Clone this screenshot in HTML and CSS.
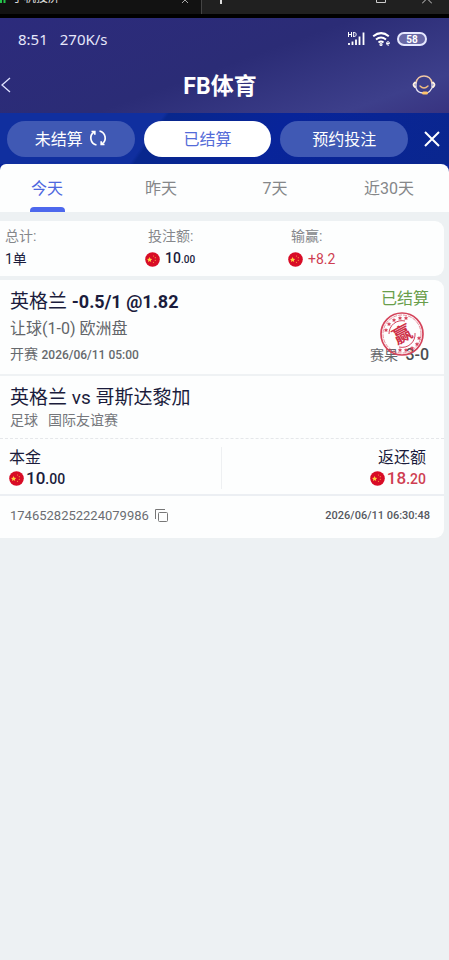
FILE: index.html
```html
<!DOCTYPE html>
<html lang="zh-CN">
<head>
<meta charset="utf-8">
<meta name="viewport" content="width=device-width, initial-scale=1">
<title>FB体育</title>
<link rel="stylesheet" href="styles.css">
</head>
<body>
<svg class="defs" aria-hidden="true">
  <symbol id="flag" viewBox="0 0 15 15">
    <circle cx="7.5" cy="7.5" r="7.3" fill="#d80c26"/>
    <path d="M4.6 5l.8 1.7 1.8.2-1.3 1.3.3 1.8-1.6-.9-1.6.9.3-1.8L2 6.900l1.8-.2z" fill="#ffcf3f"/>
    <g fill="#f59a3c"><circle cx="8.500" cy="4" r=".6"/><circle cx="10.300" cy="5.700" r=".6"/><circle cx="10.300" cy="8.300" r=".6"/><circle cx="8.500" cy="10.300" r=".6"/></g>
  </symbol>
</svg>
<div class="window-bar">
  <div class="window-tab">
    <svg width="6" height="3" viewBox="0 0 6 3"><path d="M1 0v3M4.500 0v3" stroke="#24c34a" stroke-width="2"/></svg>
    <span class="window-title">手机投屏</span>
    <svg class="tab-close" width="8" height="3" viewBox="0 0 8 3"><path d="M1 3l3-3 3 3" fill="none" stroke="#aaa"/></svg>
  </div>
  <div class="window-tools">
    <svg width="4" height="5" viewBox="0 0 4 5"><path d="M2 0v4" stroke="#ddd" stroke-width="2"/></svg>
    <svg class="window-max" width="10" height="4" viewBox="0 0 10 4"><path d="M.5 0v2.500h9V0" fill="none" stroke="#ccc"/></svg>
    <svg width="10" height="4" viewBox="0 0 10 4"><path d="M0 3.500L5-1.500l5 5" fill="none" stroke="#ccc"/></svg>
  </div>
</div>
<header class="hero">
  <div class="status">
    <span>8:51</span><span>270K/s</span>
    <div class="status-icons">
      <svg width="20" height="16" viewBox="0 0 20 16" fill="none" stroke="#fff">
        <path d="M1.500 1v5M4.500 1v5M1.500 3.500h3M6.700 1v5M6.500 1.500h1c2.200 0 2.200 4 0 4h-1"/>
        <path d="M2 12v2M5.500 10.500V14M9 8.500V14M12.500 5.500V14M16.500 1.500V14" stroke-width="1.800"/>
      </svg>
      <svg width="20" height="16" viewBox="0 0 20 16" fill="none" stroke="#fff" stroke-width="2">
        <path d="M1.200 5.200q8-6.200 15.600 0M4 8.500q5-4 10 0M6.500 11.500q2.500-2 5 0"/><circle cx="9" cy="13.500" r=".6"/>
        <path d="M14.500 12.500h3M17.500 12.500q0-1.800-1.500-1.800t-1.500 1.800 2.500 1.700" stroke-width="1"/>
      </svg>
      <span class="battery">58</span>
    </div>
  </div>
  <div class="title-row">
    <button class="icon-button back" aria-label="返回"><svg width="12" height="18" viewBox="0 0 12 18"><path d="M10 2L2 9l8 7" fill="none" stroke="#dfe1ff" stroke-width="1.300"/></svg></button>
    <h1>FB体育</h1>
    <button class="icon-button help" aria-label="客服"><svg width="24" height="22" viewBox="0 0 24 22" fill="none" stroke-linecap="round">
      <path d="M4 9C5 4 8 2 12 2s7 2 8 7" stroke="#f2c9a6" stroke-width="1.500"/>
      <path d="M4 9v5c1 3 3 5 7 5M20 9v5c-1 2-2 4-5 5" stroke="#e9e5f4" stroke-width="1.300"/>
      <path d="M3 8.500Q.2 10.500 3 13M21 8.500q2.800 2 0 4.500" stroke="#fff3e3" stroke-width="2"/>
      <path d="M8 12q4 4 8 0" stroke="#f0bd80" stroke-width="1.400"/><path d="M11.500 19h3" stroke="#ffc46c" stroke-width="3"/>
    </svg></button>
  </div>
</header>
<nav class="filters">
  <button class="pill">未结算
    <svg width="18" height="18" viewBox="0 0 18 18" fill="none" stroke="#fff" stroke-width="1.700"><path d="M7.500 16A7.200 7.200 0 0 1 5 3M10.500 2A7.200 7.200 0 0 1 13 15"/><path d="M2.500 2.500h3.300v3.300M15.500 15.500h-3.300v-3.300"/></svg>
  </button>
  <button class="pill active">已结算</button>
  <button class="pill">预约投注</button>
  <button class="icon-button" aria-label="关闭"><svg width="16" height="16" viewBox="0 0 16 16"><path d="M1 1l14 14M15 1L1 15" stroke="#fff" stroke-width="2"/></svg></button>
</nav>
<div class="tabs-wrap">
  <nav class="tabs">
    <button class="tab current">今天</button>
    <button class="tab">昨天</button>
    <button class="tab">7天</button>
    <button class="tab">近30天</button>
  </nav>
</div>
<main>
  <section class="card summary">
    <div><p class="label">总计:</p><p class="value">1单</p></div>
    <div><p class="label">投注额:</p><p class="value money"><svg class="flag"><use href="#flag"/></svg><span>10<small>.00</small></span></p></div>
    <div><p class="label">输赢:</p><p class="value money red"><svg class="flag"><use href="#flag"/></svg><span>+8.2</span></p></div>
  </section>
  <article class="card bet">
    <section class="selection">
      <div class="line"><h2>英格兰 <b>-0.5/1 @1.82</b></h2><span class="settled">已结算</span></div>
      <p class="market">让球(1-0) 欧洲盘</p>
      <div class="line details"><p>开赛 <time>2026/06/11 05:00</time></p><p class="result">赛果 <strong>3-0</strong></p></div>
      <svg class="stamp" width="46" height="46" viewBox="0 0 46 46" role="img" aria-label="赢">
        <g fill="none" stroke="#d5455c"><circle cx="23" cy="23" r="21" stroke-width="1.700"/><circle cx="23" cy="23" r="19" stroke-width=".6" stroke-dasharray="4 1"/>
        <path d="M10 23a13 13 0 0 1 16-13M36 22a13 13 0 0 1-16 14" stroke-width="1"/></g>
        <g fill="#d5455c"><path id="star" d="M7 17l.7 1.300 1.500.2-1.100 1 .3 1.500L7 20.300 5.600 21l.3-1.500-1.100-1 1.500-.2z"/><use href="#star" x="3" y="-6"/><use href="#star" x="8" y="-10"/><use href="#star" x="14" y="-12"/><use href="#star" x="20" y="-12"/><use href="#star" x="33" y="8"/><use href="#star" x="31" y="14"/><use href="#star" x="26" y="18"/><use href="#star" x="20" y="20"/><use href="#star" x="14" y="20"/></g>
        <text x="23" y="30" text-anchor="middle" transform="rotate(-28 23 23)">赢</text>
      </svg>
    </section>
    <section class="match"><h2>英格兰 vs 哥斯达黎加</h2><p>足球<span>国际友谊赛</span></p></section>
    <section class="amounts">
      <div class="stake"><p>本金</p><p class="big-money"><svg class="flag"><use href="#flag"/></svg><span>10<small>.00</small></span></p></div>
      <div class="return"><p>返还额</p><p class="big-money red"><svg class="flag"><use href="#flag"/></svg><span>18<small>.20</small></span></p></div>
    </section>
    <footer>
      <span class="order">1746528252224079986</span>
      <button class="icon-button copy" aria-label="复制"><svg width="13" height="13" viewBox="0 0 13 13" fill="none" stroke="#777"><path d="M.5 10V.5H10"/><rect x="3.500" y="3.500" width="9" height="9" rx="1"/></svg></button>
      <time>2026/06/11 06:30:48</time>
    </footer>
  </article>
</main>
</body>
</html>
```
FILE: styles.css
```css
* { box-sizing: border-box; }
body {
  margin: 0;
  min-height: 100vh;
  background: #edf1f3;
  color: #1b1c3c;
  font-family: Roboto, "Noto Sans CJK SC", sans-serif;
  font-size: 16px;
}
h1, h2, p { margin: 0; font-weight: 400; }
button { padding: 0; border: 0; background: none; color: inherit; font: inherit; }
svg { display: block; flex: none; }
.defs { position: absolute; width: 0; height: 0; }
.icon-button { display: flex; align-items: center; justify-content: center; }

.window-bar { display: flex; height: 18px; border-bottom: 4px solid #000; background: #202020; overflow: hidden; }
.window-tab { display: flex; align-items: flex-start; width: 45%; background: #121212; border-right: 1px solid #444; }
.window-title { margin: -10px 0 0 6px; color: #ddd; font-size: 12px; line-height: 16px; }
.tab-close { margin: 0 12px 0 auto; }
.window-tools { display: flex; flex: 1; gap: 36px; padding: 0 17px; }
.window-max { margin-left: auto; }

.hero { background: linear-gradient(160deg, #2c2b7c, #2b2c76 50%, #3d3f8b 85%, #383380); color: #fff; }
.status { display: flex; align-items: center; gap: 12px; height: 42px; padding: 0 22px 0 18px; color: #e6e7fa; font-family: "Noto Sans", sans-serif; font-size: 15px; }
.status-icons { display: flex; align-items: center; gap: 5px; margin-left: auto; }
.battery { display: flex; align-items: center; justify-content: center; width: 30px; height: 14px; border: 2px solid #e6e8ff; border-radius: 7px; background: #6969a7; color: #fff; font: 700 10px Roboto, sans-serif; }
.title-row { display: flex; align-items: center; justify-content: space-between; height: 53px; padding: 0 13px 4px 0; }
.back { width: 28px; justify-content: flex-start; }
.help { width: 24px; }
h1 { padding-top: 4px; font-size: 23px; font-weight: 700; line-height: 28px; }

.filters { display: flex; align-items: center; gap: 9px; height: 51px; padding: 0 9px 0 7px; background: linear-gradient(125deg, #102f9f 34%, #08278d 35%, #08249a 60%, #0a268e); color: #fff; }
.pill { display: flex; flex: 1; align-items: center; justify-content: center; gap: 6px; height: 36px; padding-bottom: 2px; border-radius: 18px; background: #4059b4; }
.pill.active { background: #fff; color: #536bd8; }
.filters .icon-button { width: 16px; margin-left: 7px; }

.tabs-wrap { background: #08249a; }
.tabs { display: grid; grid-template-columns: repeat(4, 1fr); column-gap: 20px; height: 48px; padding-right: 13px; border-radius: 6px 8px 0 0; background: #fdfefe; color: #858789; }
.tab { position: relative; padding-bottom: 2px; white-space: nowrap; }
.current { color: #4d68de; }
.current::after { content: ""; position: absolute; bottom: 0; left: 50%; width: 35px; height: 5px; margin-left: -17px; border-radius: 4px 4px 0 0; background: #4d68ed; }

main { display: grid; gap: 4px; padding: 9px 5px 24px 0; }
.card { background: #fdfefe; border-radius: 0 9px 9px 0; }
.summary { display: grid; grid-template-columns: 143px 143px 1fr; padding: 5px 5px 4px; }
.label { height: 20px; color: #85878b; font-size: 14px; line-height: 20px; }
.value { height: 26px; font-size: 14px; line-height: 26px; }
.money { display: flex; align-items: center; gap: 5px; margin-left: -3px; font-weight: 500; }
.flag { width: 15px; height: 15px; }
.value small { font-size: 10px; }
.red { color: #cf3e52; }
.value.red { font-weight: 400; }

.selection { position: relative; padding: 8px 15px 7px 10px; border-bottom: 2px solid #eff2f4; }
.line { display: flex; justify-content: space-between; }
h2 { height: 27px; font-size: 19px; line-height: 28px; }
h2 b { font-size: 18px; font-weight: 700; }
.settled { color: #699e4b; line-height: 22px; }
.market { height: 27px; color: #626569; font-size: 16px; line-height: 27px; }
.details { height: 25px; color: #66696d; font-size: 14px; line-height: 25px; }
.details time { font-size: 12px; font-weight: 500; }
.result strong { margin-left: 4px; color: #4b4d51; font-size: 16px; font-weight: 500; }
.stamp { position: absolute; right: 19px; top: 31px; }
.stamp text { fill: #cf3048; font: 700 19px "Noto Sans CJK SC", sans-serif; }

.match { padding: 8px 10px 7px; border-bottom: 1px dashed #e5e7ea; }
.match p { height: 20px; color: #75777c; font-size: 14px; line-height: 18px; }
.match p span { margin-left: 10px; }
.amounts { display: grid; grid-template-columns: 1fr 1fr; padding: 8px 0 5px; border-bottom: 2px solid #eceff3; }
.amounts > div { padding: 0 18px 0 9px; }
.amounts p { height: 21px; line-height: 22px; }
.stake { border-right: 1px solid #eef0f2; }
.return { text-align: right; }
.amounts .big-money { display: flex; align-items: center; gap: 2px; line-height: 20px; font-size: 17px; font-weight: 500; }
.big-money small { font-size: 14px; }
.return .big-money { justify-content: flex-end; }
.card footer { display: flex; align-items: center; height: 42px; padding: 0 14px 4px 10px; color: #6b6d72; font-size: 13px; }
.copy { margin-left: 6px; }
.card footer time { margin-left: auto; color: #56585f; font-size: 11px; font-weight: 500; }
```
